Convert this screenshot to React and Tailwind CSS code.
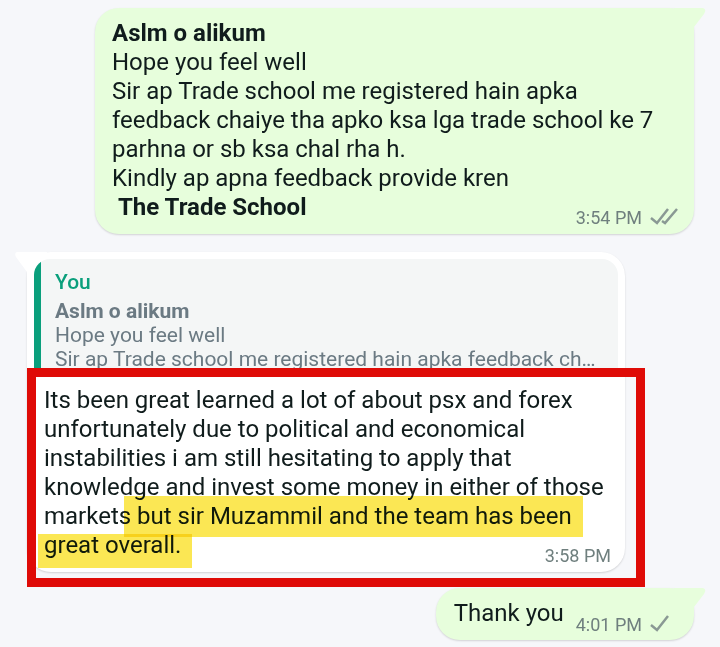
import React from 'react';

const SentTail = () => (
    <svg className="absolute top-0 -right-3 h-6 w-8" viewBox="0 0 32 24" aria-hidden="true">
        <path d="M0 0H29Q33 1 30 6L20 19V24H0Z" fill="#e7fedc" />
    </svg>
);

const ReceivedTail = () => (
    <svg className="absolute top-0 -left-3 h-6 w-8" viewBox="0 0 32 24" aria-hidden="true">
        <path d="M32 0H2Q-1 1 1 5L12 20V24H32Z" fill="#ffffff" />
    </svg>
);

const Ticks = ({ double }) => (
    <svg
        className={double ? 'h-5 w-7' : 'h-5 w-5'}
        viewBox={double ? '0 0 28 20' : '0 0 20 20'}
        fill="none"
        stroke="#8a9994"
        strokeWidth="2.5"
        aria-hidden="true"
    >
        <path d="M1 10L7 15L18 1" />
        {double && <path d="M12 13L15 15L27 1" />}
    </svg>
);

const Time = ({ children }) => (
    <time className="text-[18px] leading-5 text-[#6f7f7e]">{children}</time>
);

const App = () => {
    return (
        <main className="flex min-h-screen flex-col bg-[#f6f7fa] pt-2 pr-[26px] pb-[7px] pl-[27px] font-['Roboto',sans-serif] text-2xl leading-[29px] text-[#101c1c]">
            {/* Sent message */}
            <article className="relative ml-17 rounded-3xl bg-[#e7fedc] px-[17px] pt-[11px] pb-3 shadow-[0_1px_2px_#00000026]">
                <SentTail />
                <p className="whitespace-pre-wrap">
                    <strong className="font-bold">Aslm o alikum</strong>
                    <br />
                    Hope you feel well
                    <br />
                    Sir ap Trade school me registered hain apka
                    <br />
                    feedback chaiye tha apko ksa lga trade school ke 7
                    <br />
                    parhna or sb ksa chal rha h.
                    <br />
                    Kindly ap apna feedback provide kren
                    <br />
                    <strong className="font-bold"> The Trade School</strong>
                </p>
                <div className="absolute right-4 bottom-1.5 flex items-center gap-2">
                    <Time>3:54 PM</Time>
                    <Ticks double />
                </div>
            </article>

            {/* Reply with quoted message */}
            <article className="relative mt-[18px] mr-[69px] rounded-3xl bg-white pt-[7px] shadow-[0_1px_2px_#00000026]">
                <ReceivedTail />
                <div className="relative mx-[7px] flex overflow-hidden rounded-t-2xl bg-[#f4f6f6]">
                    <div className="w-[7px] shrink-0 bg-[#0a9f7c]" />
                    <blockquote className="min-w-0 pt-[9px] pl-3.5 text-[21px] leading-6 text-[#6b7a83]">
                        <cite className="mb-[3px] block leading-7 font-medium text-[#0a9f7c] not-italic">You</cite>
                        <p>
                            <strong className="font-bold">Aslm o alikum</strong>
                            <br />
                            Hope you feel well
                            <br />
                            <span className="whitespace-nowrap">
                                Sir ap Trade school me registered hain apka feedback ch…
                            </span>
                        </p>
                    </blockquote>
                </div>
                <div className="relative px-[17px] pt-[15px] pb-3">
                    <p>
                        Its been great learned a lot of about psx and forex
                        <br />
                        unfortunately due to political and economical
                        <br />
                        instabilities i am still hesitating to apply that
                        <br />
                        knowledge and invest some money in either of those
                        <br />
                        markets but sir Muzammil and the team has been
                        <br />
                        great overall.
                    </p>
                    <div className="absolute right-3.5 bottom-1.5 flex">
                        <Time>3:58 PM</Time>
                    </div>
                    {/* Marker and frame drawn over the message */}
                    <div className="absolute right-[42px] bottom-[35px] left-[97px] h-[41px] bg-[#fbe754] mix-blend-multiply" />
                    <div className="absolute bottom-1 left-[11px] h-[34px] w-[154px] bg-[#fbe754] mix-blend-multiply" />
                    <div className="absolute -top-[3px] -right-5 -bottom-[15px] left-0 border-[9px] border-[#df0b07]" />
                </div>
            </article>

            {/* Sent message */}
            <article className="relative mt-4 flex gap-3 self-end rounded-3xl bg-[#e7fedc] pr-6 pl-[18px] shadow-[0_1px_2px_#00000026]">
                <SentTail />
                <p className="pt-[11px] pb-3">Thank you</p>
                <div className="flex items-center gap-2 self-end pb-[5px]">
                    <Time>4:01 PM</Time>
                    <Ticks />
                </div>
            </article>
        </main>
    );
};

export default App;
